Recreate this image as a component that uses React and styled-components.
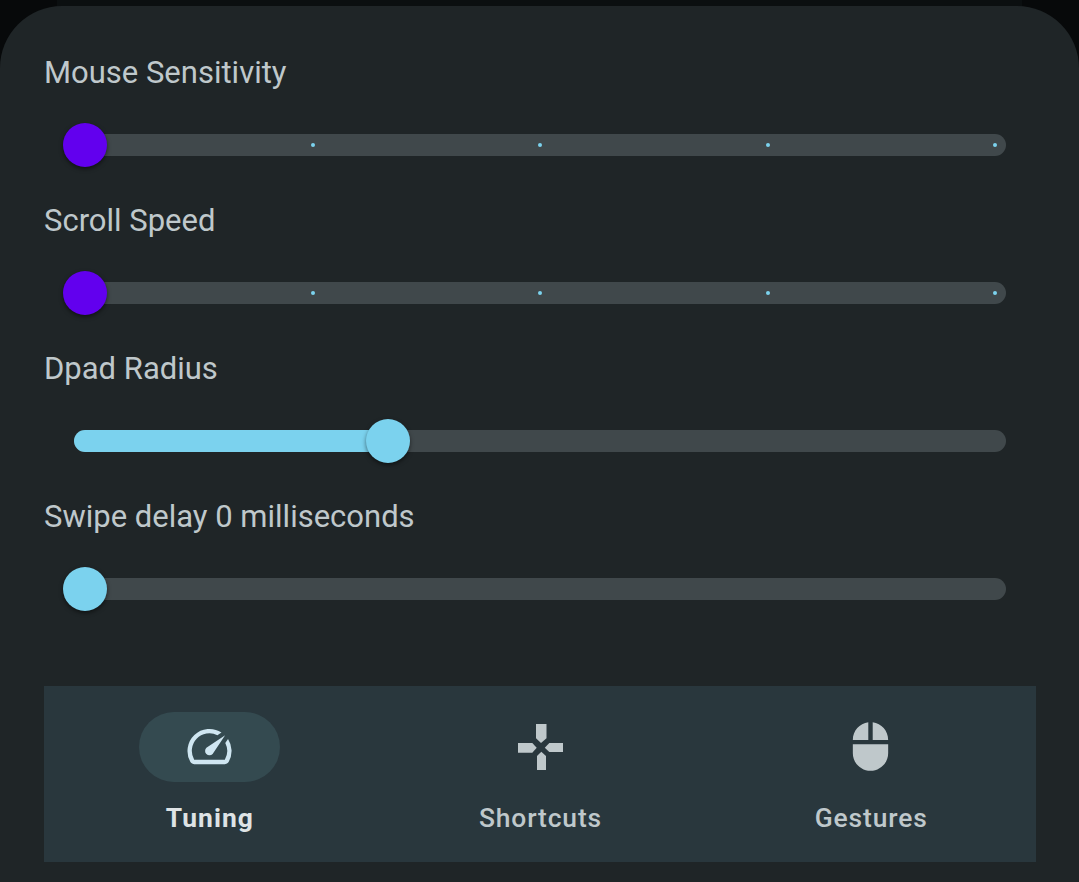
import React from 'react';
import styled, { createGlobalStyle } from 'styled-components';

const GlobalStyle = createGlobalStyle`
  * { box-sizing: border-box; }
  body {
    margin: 0;
    background: linear-gradient(90deg, #07090a 57px, #0b0f10 57px, #0b0f10 1022px, #07090a 1022px);
    font-family: Roboto, "Liberation Sans", sans-serif;
    overflow: hidden;
  }
`;

const Screen = styled.div`
  width: 1079px;
  height: 882px;
  padding-top: 6px;
`;

const Sheet = styled.main`
  height: 876px;
  padding: 45px 43px 0 44px;
  border-radius: 62px 62px 0 0;
  background: #1f2527;
  display: flex;
  flex-direction: column;
`;

const Setting = styled.section`
  height: 148px;
  display: flex;
  flex-direction: column;
`;

const SettingLabel = styled.label`
  height: 44px;
  line-height: 44px;
  font-size: 31px;
  color: #bfc8cb;
  white-space: nowrap;
`;

const SliderArea = styled.div`
  height: 44px;
  margin: 28px 30px 0;
  display: flex;
  align-items: center;
`;

const Track = styled.div`
  position: relative;
  flex: 1;
  height: 22px;
  padding: 0 9px;
  border-radius: 11px;
  background: #40484b;
  display: flex;
  align-items: center;
  justify-content: space-between;
`;

const Fill = styled.div`
  position: absolute;
  left: 0;
  top: 0;
  height: 22px;
  border-radius: 11px;
  background: #7bd2ee;
`;

const Tick = styled.span`
  width: 4px;
  height: 4px;
  border-radius: 50%;
  background: #7bd2ee;
`;

const Thumb = styled.div`
  position: absolute;
  top: -11px;
  width: 44px;
  height: 44px;
  margin-left: -22px;
  border-radius: 50%;
  background: ${(p) => p.$color};
  box-shadow: 0 2px 4px rgba(0, 0, 0, 0.5);
`;

const NavBar = styled.nav`
  height: 176px;
  margin-top: 43px;
  display: grid;
  grid-template-columns: repeat(3, 1fr);
  background: #29373d;
`;

const NavItem = styled.div`
  padding-top: 26px;
  display: flex;
  flex-direction: column;
  align-items: center;
  color: ${(p) => (p.$active ? '#cfe6f1' : '#bfc8cb')};
`;

const Pill = styled.div`
  width: 141px;
  height: 70px;
  padding-bottom: 1px;
  border-radius: 35px;
  background: ${(p) => (p.$active ? '#344a50' : 'transparent')};
  display: flex;
  align-items: center;
  justify-content: center;
`;

const Icon = styled.svg`
  width: 53px;
  height: 53px;
  fill: currentColor;
`;

const NavLabel = styled.span`
  margin-top: 18px;
  padding-left: 1px;
  height: 36px;
  line-height: 36px;
  font-size: 26.4px;
  font-weight: ${(p) => (p.$active ? 700 : 500)};
  letter-spacing: ${(p) => (p.$active ? '1.05px' : '0.88px')};
  color: ${(p) => (p.$active ? '#dee3e5' : '#bfc8cb')};
`;

const settings = [
  { label: 'Mouse Sensitivity', value: 0, ticks: 5, color: '#6200ee' },
  { label: 'Scroll Speed', value: 0, ticks: 5, color: '#6200ee' },
  { label: 'Dpad Radius', value: 303, ticks: 0, color: '#7bd2ee' },
  { label: 'Swipe delay 0 milliseconds', value: 0, ticks: 0, color: '#7bd2ee' },
];

function Slider({ value, ticks, color }) {
  return (
    <SliderArea>
      <Track>
        {Array.from({ length: ticks }, (_, i) => <Tick key={i} />)}
        {value > 0 && <Fill style={{ width: value + 22 }} />}
        <Thumb $color={color} style={{ left: value + 11 }} />
      </Track>
    </SliderArea>
  );
}

const SpeedIcon = () => (
  <Icon viewBox="0 0 24 24">
    <path d="M20.38 8.57l-1.23 1.85a8 8 0 0 1-.22 7.58H5.07A8 8 0 0 1 15.58 6.85l1.85-1.23A10 10 0 0 0 3.35 19a2 2 0 0 0 1.72 1h13.85a2 2 0 0 0 1.74-1 10 10 0 0 0-.27-10.44z" />
    <path d="M10.59 15.41a2 2 0 0 0 2.83 0l5.66-8.49-8.49 5.66a2 2 0 0 0 0 2.83z" />
  </Icon>
);

const DpadIcon = () => (
  <Icon viewBox="0 0 53 53">
    <path d="M23 4H33.5V18.3L28 23L23 18.3Z" />
    <path d="M5 23H19.3L23.7 27.8L19.3 32.7H5Z" />
    <path d="M50 23H36.3L31.8 27.7L36.3 32H50Z" />
    <path d="M24 50V36L28.3 31.7L33 36V50Z" />
  </Icon>
);

const MouseIcon = () => (
  <Icon viewBox="0 0 24 24">
    <path d="M13 1.07V9h7c0-4.08-3.05-7.44-7-7.93zM4 15c0 4.42 3.58 8 8 8s8-3.58 8-8v-4H4v4zm7-13.93C7.05 1.56 4 4.92 4 9h7V1.07z" />
  </Icon>
);

const tabs = [
  { label: 'Tuning', Glyph: SpeedIcon, active: true },
  { label: 'Shortcuts', Glyph: DpadIcon },
  { label: 'Gestures', Glyph: MouseIcon },
];

export default function App() {
  return (
    <Screen>
      <GlobalStyle />
      <Sheet>
        {settings.map((s) => (
          <Setting key={s.label}>
            <SettingLabel>{s.label}</SettingLabel>
            <Slider value={s.value} ticks={s.ticks} color={s.color} />
          </Setting>
        ))}
        <NavBar>
          {tabs.map(({ label, Glyph, active }) => (
            <NavItem key={label} $active={active}>
              <Pill $active={active}><Glyph /></Pill>
              <NavLabel $active={active}>{label}</NavLabel>
            </NavItem>
          ))}
        </NavBar>
      </Sheet>
    </Screen>
  );
}
